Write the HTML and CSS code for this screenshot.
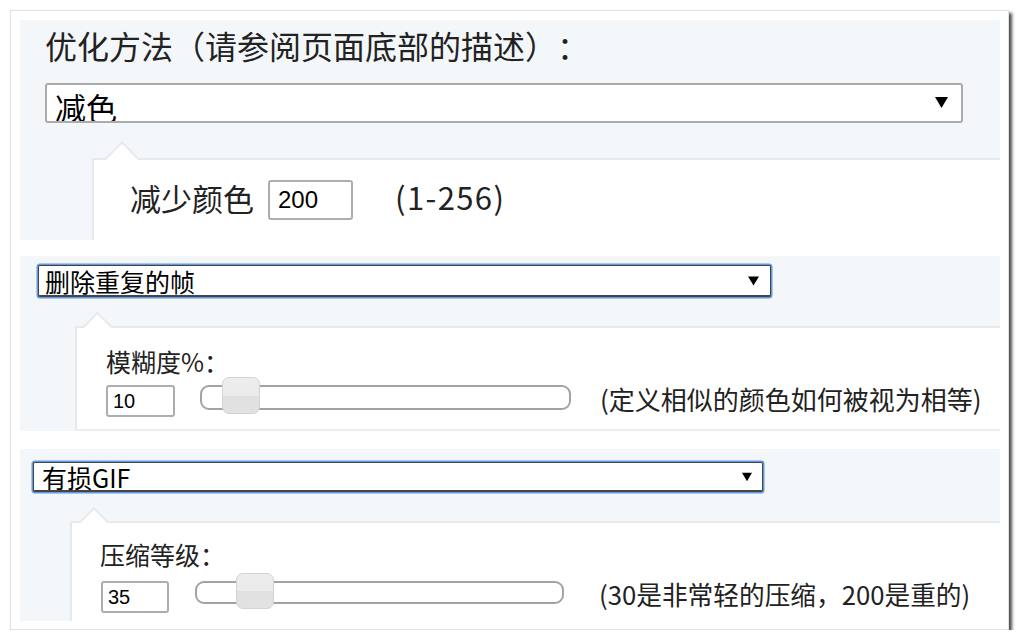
FILE: index.html
```html
<!DOCTYPE html>
<html lang="zh-CN">
<head>
<meta charset="utf-8">
<title>优化方法</title>
<link rel="stylesheet" href="styles.css">
</head>
<body>
<div class="card">
  <section class="panel p1">
    <div class="title">优化方法（请参阅页面底部的描述）：</div>
    <div class="select s1">
      <span class="sel-text">减色</span>
      <svg class="caret" viewBox="0 0 12 10"><polygon points="0,0 12,0 6,10"/></svg>
    </div>
    <div class="pop pop1">
      <div class="row r1">
        <span class="lbl">减少颜色</span>
        <span class="num n1">200</span>
        <span class="hint">(1-256)</span>
      </div>
    </div>
  </section>

  <section class="panel p2">
    <div class="select focus s2">
      <span class="sel-text">删除重复的帧</span>
      <svg class="caret" viewBox="0 0 12 10"><polygon points="0,0 12,0 6,10"/></svg>
    </div>
    <div class="pop pop2">
      <div class="lbl">模糊度%：</div>
      <div class="row r2">
        <span class="num n2">10</span>
        <span class="track t2"><span class="thumb"></span></span>
        <span class="hint">(定义相似的颜色如何被视为相等)</span>
      </div>
    </div>
  </section>

  <section class="panel p3">
    <div class="select focus s3">
      <span class="sel-text">有损GIF</span>
      <svg class="caret" viewBox="0 0 12 10"><polygon points="0,0 12,0 6,10"/></svg>
    </div>
    <div class="pop pop3">
      <div class="lbl">压缩等级：</div>
      <div class="row r3">
        <span class="num n3">35</span>
        <span class="track t3"><span class="thumb"></span></span>
        <span class="hint">(30是非常轻的压缩，200是重的)</span>
      </div>
    </div>
  </section>
</div>
</body>
</html>
```

FILE: styles.css
```css
html, body {
  margin: 0;
  padding: 0;
  background: #ffffff;
}
body {
  font-family: "Noto Sans CJK SC", "Noto Sans", sans-serif;
  color: #222222;
  text-spacing-trim: space-all;
}
.card {
  margin: 10px 0 0 10px;
  width: 999px;
  height: 620px;
  box-sizing: border-box;
  border: 1px solid #e2e2e2;
  box-shadow: 3px 3px 3px rgba(0, 0, 0, 0.7);
  padding: 9px 8px 0 9px;
  background: #ffffff;
  display: flex;
  flex-direction: column;
}
.panel {
  background: #f4f7fa;
  box-sizing: border-box;
  display: flex;
  flex-direction: column;
  align-items: flex-start;
  flex: none;
}

/* ---------- selects ---------- */
.select {
  box-sizing: border-box;
  background: #ffffff;
  display: flex;
  align-items: flex-start;
  overflow: hidden;
  color: #000000;
  flex: none;
}
.sel-text {
  white-space: nowrap;
}
.caret {
  margin-left: auto;
  flex: none;
  fill: #000000;
}
.focus {
  border: 1px solid #454545;
  border-bottom-width: 2px;
  border-radius: 2px;
  box-shadow: 0 0 0 1.5px #5f98e6;
}

/* ---------- popover boxes ---------- */
.pop {
  position: relative;
  align-self: stretch;
  background: #ffffff;
  border-top: 2px solid #e6e9ed;
  border-left: 2px solid #e6e9ed;
  box-sizing: border-box;
  flex: 1;
}
.pop::before {
  content: "";
  position: absolute;
  background: #ffffff;
  border-top: 2px solid #e6e9ed;
  border-left: 2px solid #e6e9ed;
  box-sizing: border-box;
  transform: rotate(45deg);
}
.row {
  display: flex;
  align-items: flex-start;
}
.lbl {
  white-space: nowrap;
}
.hint {
  white-space: nowrap;
}
.num {
  box-sizing: border-box;
  border: 2px solid #adadad;
  border-radius: 3px;
  background: #ffffff;
  font-family: "Liberation Sans", Arial, sans-serif;
  color: #000000;
  display: flex;
  align-items: center;
  flex: none;
}
.track {
  position: relative;
  box-sizing: border-box;
  border: 2px solid #a3a3a3;
  border-radius: 9px;
  background: #ffffff;
  flex: none;
}
.thumb {
  position: absolute;
  box-sizing: border-box;
  border: 1.5px solid #d3d3d3;
  border-radius: 7px;
  background: linear-gradient(#ededed 0%, #ebebeb 50%, #e0e0e0 51%, #e2e2e2 100%);
}

/* ---------- panel 1 ---------- */
.p1 {
  height: 220px;
  padding: 10px 0 0 25px;
}
.title {
  font-size: 32px;
  line-height: 31px;
  height: 31px;
  white-space: nowrap;
}
.s1 {
  margin-top: 22px;
  width: 918px;
  height: 40px;
  border: 2px solid #acacac;
  border-radius: 3px;
  padding: 6px 0 0 8px;
}
.s1 .sel-text {
  font-size: 31px;
  line-height: 31px;
}
.s1 .caret {
  width: 13px;
  height: 11px;
  margin-top: 6px;
  margin-right: 13px;
}
.pop1 {
  margin: 35px 0 0 47px;
  padding: 20px 0 0 36px;
}
.pop1::before {
  width: 24px;
  height: 24px;
  left: 16px;
  top: -14px;
}
.r1 .lbl {
  font-size: 31px;
  line-height: 31px;
  margin-top: 2px;
}
.n1 {
  width: 85px;
  height: 40px;
  margin-left: 14px;
  padding-left: 8px;
  font-size: 24px;
}
.r1 .hint {
  font-size: 31px;
  line-height: 31px;
  margin-left: 42px;
  margin-top: 1px;
  letter-spacing: 1.4px;
}

/* ---------- panel 2 ---------- */
.p2 {
  margin-top: 16px;
  height: 175px;
  padding: 9px 0 0 18px;
}
.s2 {
  width: 733px;
  height: 32px;
  padding: 3px 0 0 6px;
}
.s2 .sel-text,
.s3 .sel-text {
  font-size: 25px;
  line-height: 25px;
}
.s2 .caret {
  width: 11px;
  height: 10px;
  margin-top: 7px;
  margin-right: 11px;
}
.pop2 {
  margin: 29px 0 0 37px;
  padding: 21px 0 0 29px;
  border-bottom: 2px solid #eceef1;
}
.pop2::before {
  width: 21px;
  height: 21px;
  left: 9.5px;
  top: -12.5px;
}
.pop2 .lbl,
.pop3 .lbl {
  font-size: 25px;
  line-height: 25px;
}
.r2 {
  margin-top: 11px;
}
.n2 {
  width: 69px;
  height: 32px;
  padding-left: 5px;
  font-size: 20px;
}
.t2 {
  width: 371px;
  height: 25px;
  margin-left: 25px;
}
.t2 .thumb {
  left: 20px;
  top: -10px;
  width: 38px;
  height: 37px;
}
.r2 .hint {
  font-size: 26px;
  line-height: 26px;
  margin-left: 29px;
  margin-top: 1px;
}

/* ---------- panel 3 ---------- */
.p3 {
  margin-top: 18px;
  height: 172px;
  padding: 13px 0 0 13px;
}
.s3 {
  width: 730px;
  height: 30px;
  padding: 2px 0 0 8px;
}
.s3 .caret {
  width: 10px;
  height: 10px;
  margin-top: 7px;
  margin-right: 10px;
}
.pop3 {
  margin: 29px 0 0 37px;
  padding: 19px 0 0 28px;
}
.pop3::before {
  width: 20px;
  height: 20px;
  left: 12px;
  top: -12px;
}
.r3 {
  margin-top: 14px;
}
.n3 {
  width: 68px;
  height: 32px;
  margin-left: 1px;
  padding-left: 5px;
  font-size: 20px;
}
.t3 {
  width: 369px;
  height: 23px;
  margin-left: 26px;
}
.t3 .thumb {
  left: 39px;
  top: -10px;
  width: 38px;
  height: 36px;
}
.r3 .hint {
  font-size: 25.7px;
  line-height: 26px;
  margin-left: 35px;
  margin-top: 0px;
}
```
